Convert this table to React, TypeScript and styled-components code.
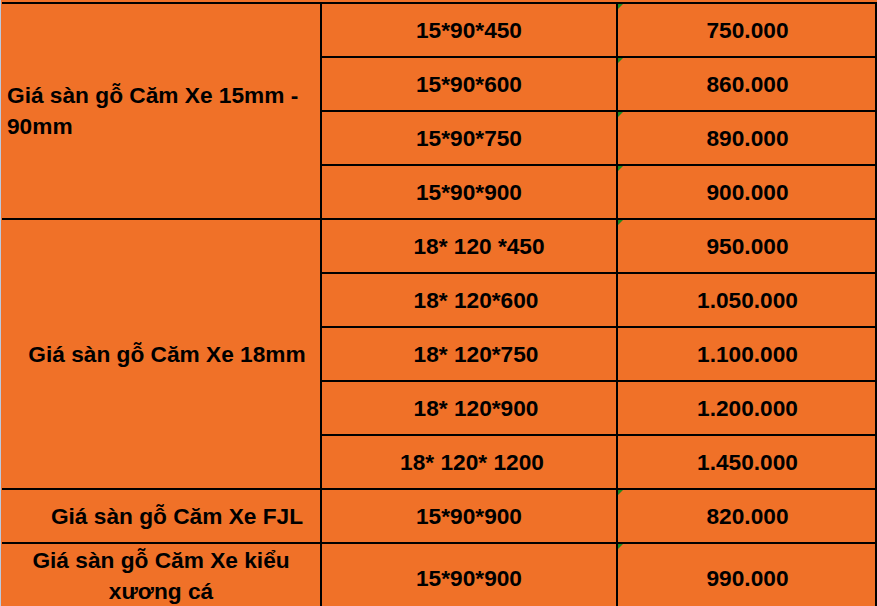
import React from "react";
import styled, { createGlobalStyle } from "styled-components";

const ORANGE = "#F07128";

const GlobalStyle = createGlobalStyle`
  html, body {
    margin: 0;
    padding: 0;
    background: ${ORANGE};
  }
  body {
    font-family: "Liberation Sans", Arial, sans-serif;
  }
`;

const Sheet = styled.div({
  width: "877px",
  boxSizing: "border-box",
  paddingTop: "2px",
  paddingLeft: "1px",
  borderLeft: "1px solid #bcc9df",
  backgroundColor: ORANGE,
});

const Grid = styled.div({
  display: "grid",
  gridTemplateColumns: "318px 294px 257px",
  gridTemplateRows: "repeat(10, 52px) 68px",
  gap: "2px",
  padding: "2px 2px 2px 0",
  backgroundColor: "#000000",
});

const Cell = styled.div<{
  $span?: number;
  $shift?: number;
  $lift?: number;
  $align?: "left" | "center";
  $flag?: boolean;
}>`
  position: relative;
  display: flex;
  align-items: center;
  justify-content: ${(p) => (p.$align === "left" ? "flex-start" : "center")};
  text-align: ${(p) => (p.$align === "left" ? "left" : "center")};
  grid-row: ${(p) => (p.$span ? `span ${p.$span}` : "auto")};
  padding-left: ${(p) => (p.$align === "left" ? 5 : (p.$shift ?? 0) * 2)}px;
  padding-bottom: ${(p) => (p.$lift ?? 0) * 2}px;
  background-color: ${ORANGE};
  color: #000000;
  font-size: 22.7px;
  font-weight: bold;
  line-height: 31px;
  white-space: pre;

  &::before {
    content: "";
    display: ${(p) => (p.$flag ? "block" : "none")};
    position: absolute;
    top: 0;
    left: 0;
    width: 0;
    height: 0;
    border-top: 5px solid #1f8a1f;
    border-right: 5px solid transparent;
  }
`;

type Row = { size: string; price: string; flag?: boolean; shift?: number };
type Group = {
  title: React.ReactNode;
  align?: "left" | "center";
  shift?: number;
  lift?: number;
  rows: Row[];
};

const groups: Group[] = [
  {
    title: (
      <span>
        Giá sàn gỗ Căm Xe 15mm -<br />
        90mm
      </span>
    ),
    align: "left",
    rows: [
      { size: "15*90*450", price: "750.000", flag: true },
      { size: "15*90*600", price: "860.000", flag: true },
      { size: "15*90*750", price: "890.000", flag: true },
      { size: "15*90*900", price: "900.000", flag: true },
    ],
  },
  {
    title: "Giá sàn gỗ Căm Xe 18mm",
    shift: 6,
    rows: [
      { size: "18* 120 *450", price: "950.000", flag: true, shift: 10 },
      { size: "18* 120*600", price: "1.050.000", shift: 7 },
      { size: "18* 120*750", price: "1.100.000", shift: 7 },
      { size: "18* 120*900", price: "1.200.000", shift: 7 },
      { size: "18* 120* 1200", price: "1.450.000", shift: 3 },
    ],
  },
  {
    title: "Giá sàn gỗ Căm Xe FJL",
    shift: 16,
    rows: [{ size: "15*90*900", price: "820.000", flag: true }],
  },
  {
    title: (
      <span>
        Giá sàn gỗ Căm Xe kiểu
        <br />
        xương cá
      </span>
    ),
    lift: 2,
    rows: [{ size: "15*90*900", price: "990.000", flag: true }],
  },
];

export default function App() {
  return (
    <>
      <GlobalStyle />
      <Sheet>
        <Grid>
          {groups.map((g, gi) =>
            g.rows.map((r, ri) => (
              <React.Fragment key={`${gi}-${ri}`}>
                {ri === 0 && (
                  <Cell $span={g.rows.length} $align={g.align} $shift={g.shift} $lift={g.lift}>
                    {g.title}
                  </Cell>
                )}
                <Cell $shift={r.shift}>{r.size}</Cell>
                <Cell $flag={r.flag} $shift={1}>
                  {r.price}
                </Cell>
              </React.Fragment>
            ))
          )}
        </Grid>
      </Sheet>
    </>
  );
}
